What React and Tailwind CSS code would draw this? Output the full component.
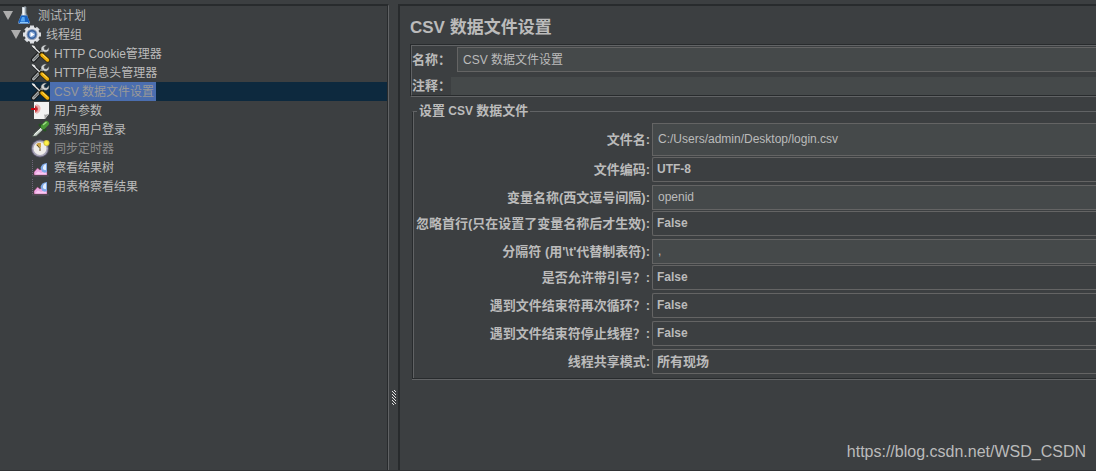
function Flask() {
    return (
        <svg className="w-5 h-[19px]" viewBox="0 0 20 19">
            <path d="M8 1h4v6l3.500 8.500q1 2.500-1.500 2.500H6q-2.500 0-1.500-2.500L8 7z" fill="#aebac4" />
            <path d="M7 9.500h6l2.500 6q.5 2-1.500 2H6q-2 0-1.500-2z" fill="#1763c4" />
            <path d="M8 11h2.500l.5 4.500H6.500z" fill="#58a8f2" />
            <path d="M6 16.500h8" stroke="#8cc8fa" />
            <path d="M8.500 1.500h2V9h-2z" fill="#f4f7f9" />
            <path d="M12 1v6l1.500 3" stroke="#6c7880" fill="none" />
            <path d="M11 2V0" stroke="#9aa4ab" />
        </svg>
    );
}

function Gear() {
    return (
        <svg className="w-5 h-[19px]" viewBox="0 0 20 19">
            <path d="M10 .5v18M1 9.500h18M3.700 3.200l12.600 12.600M16.300 3.200L3.700 15.800" stroke="#d9dce0" strokeWidth="4" />
            <circle cx="10" cy="9.500" r="7.500" fill="#e2e4e8" />
            <circle cx="10" cy="9.500" r="5.500" fill="#8d9bb3" />
            <circle cx="10" cy="9.500" r="4.500" fill="#35619f" />
            <circle cx="10" cy="9.500" r="3" fill="#86a8d8" />
            <path d="M8.500 7l4 2.500-4 2.500z" fill="#fff" />
        </svg>
    );
}

function Tools() {
    return (
        <svg className="w-5 h-[19px]" viewBox="0 0 20 19">
            <path d="M3.500 16L12.500 6.500" stroke="#16181a" strokeWidth="5" strokeLinecap="round" />
            <path d="M3.500 16L12.500 6.500" stroke="#a9adae" strokeWidth="3" strokeLinecap="round" />
            <path d="M4 15.500L9 10.500" stroke="#4d5153" />
            <path d="M16.500 1L14 3.500l.5 2 2 .5L19 3.500q.5 3.500-2 4.500-1.500.5-3 0L11 6q-.5-2.500 1.500-4 2-1.500 4-1z" fill="#d3d6d7" stroke="#4a4d4f" strokeWidth=".5" />
            <path d="M3 2.500l8.500 8" stroke="#16181a" strokeWidth="2.500" />
            <path d="M2.500 2l9 8.500" stroke="#dfe1e2" strokeWidth="1.500" />
            <path d="M1.500 1l3 1 1.500 2.500-2.500-1z" fill="#eee" />
            <path d="M11.500 10.500l6 5.500" stroke="#33280a" strokeWidth="5" strokeLinecap="round" />
            <path d="M12 11l5.500 5" stroke="#eeae0a" strokeWidth="3.500" strokeLinecap="round" />
            <path d="M12.500 10.500l5 4.500" stroke="#ffe169" />
        </svg>
    );
}

function Page() {
    return (
        <svg className="w-5 h-[19px]" viewBox="0 0 20 19">
            <path d="M4 1h15v12l-4 5H4z" fill="#f2f2f2" />
            <path d="M19 12.500L14.500 18q.5-3-.5-4.500 3 .5 5-1z" fill="#a5a5a5" />
            <path d="M6 3q5 1 4.500 5T6 13q2-5 0-10z" fill="#eab2b2" />
            <path d="M5 4q3 1 3 4t-3 4q1-4 0-8z" fill="#d86a6a" />
            <path d="M1 8h5" stroke="#c4000a" strokeWidth="2" />
            <path d="M5 5l3 3-3 3z" fill="#c9202a" />
        </svg>
    );
}

function Dropper() {
    return (
        <svg className="w-5 h-[19px]" viewBox="0 0 20 19">
            <path d="M2 17l2-3.500L11 7l2.500 2.500-7 6.500z" fill="#c6d0c8" stroke="#3f4a42" />
            <path d="M4.500 14.500L11 8.500" stroke="#f4f8f4" />
            <path d="M10 5l5 5" stroke="#24521f" strokeWidth="3" strokeLinecap="round" />
            <path d="M13.500 6.500L16.500 3.500" stroke="#4b9a38" strokeWidth="5" strokeLinecap="round" />
            <path d="M13.500 4.500L16 2.500" stroke="#a2dc88" strokeWidth="1.500" strokeLinecap="round" />
        </svg>
    );
}

function Clock() {
    return (
        <svg className="w-5 h-[19px]" viewBox="0 0 20 19">
            <circle cx="10" cy="9.500" r="9" fill="#5e5a70" />
            <circle cx="10" cy="9.500" r="8" fill="#a9a6b8" />
            <circle cx="10" cy="9.500" r="6.500" fill="#efedea" />
            <path d="M6 6q1.500-3 5-2v5L9 8z" fill="#cfa548" />
            <path d="M7 6l3 3.500V12" stroke="#5a4a20" fill="none" />
            <circle cx="16.500" cy="4" r="3" fill="#d9c83c" />
            <circle cx="16.500" cy="4" r="2" fill="#fff24a" />
        </svg>
    );
}

function Graph() {
    return (
        <svg className="w-5 h-[19px]" viewBox="0 0 20 19">
            <path d="M2.500 2v16H19" stroke="#6d6478" fill="none" strokeDasharray="1 1" />
            <path d="M4 17v-3l3.500-4L10 12l3-2 4 3v4z" fill="#f0a9e6" stroke="#8d3a5e" strokeWidth=".5" />
            <path d="M5 16.500l3-3 3 1.500 4-1.500 2 3z" fill="#f9c9f3" />
            <path d="M10.500 10q1-4.500 6.500-5v9q-3 1.500-5-.5z" fill="#7fa9e8" />
            <path d="M13 9q.5-2.500 3-3v6q-2 .5-3-1z" fill="#e2eefd" />
        </svg>
    );
}

const treeItems = [
    { name: 'HTTP Cookie管理器', icon: Tools },
    { name: 'HTTP信息头管理器', icon: Tools },
    { name: 'CSV 数据文件设置', icon: Tools, selected: true },
    { name: '用户参数', icon: Page },
    { name: '预约用户登录', icon: Dropper },
    { name: '同步定时器', icon: Clock, disabled: true },
    { name: '察看结果树', icon: Graph },
    { name: '用表格察看结果', icon: Graph },
];

const fields = [
    { id: 'filename', label: '文件名:', value: 'C:/Users/admin/Desktop/login.csv', tall: true },
    { id: 'encoding', label: '文件编码:', value: 'UTF-8', options: ['UTF-8', 'UTF-16', 'ISO-8859-15', 'US-ASCII'] },
    { id: 'variables', label: '变量名称(西文逗号间隔):', value: 'openid' },
    { id: 'ignoreFirst', label: '忽略首行(只在设置了变量名称后才生效):', value: 'False', options: ['True', 'False'] },
    { id: 'delimiter', label: "分隔符 (用'\\t'代替制表符):", value: ',' },
    { id: 'quoted', label: '是否允许带引号？:', value: 'False', options: ['True', 'False'] },
    { id: 'recycle', label: '遇到文件结束符再次循环？:', value: 'False', options: ['True', 'False'] },
    { id: 'stopThread', label: '遇到文件结束符停止线程？:', value: 'False', options: ['True', 'False'] },
    { id: 'shareMode', label: '线程共享模式:', value: '所有现场', options: ['所有现场', '当前线程组', '当前线程'], large: true },
];

function Arrow() {
    return (
        <svg className="w-[10px] h-[9px]" viewBox="0 0 10 9">
            <path d="M0 0h10L5 9z" fill="#adadad" />
        </svg>
    );
}

function Tree() {
    return (
        <nav className="w-[389px] shrink-0 border-t-2 border-t-[#282b2d] border-r border-r-[#616365]">
            <div className="h-full border-r border-r-[#282b2d] text-xs">
                <div className="flex items-center h-[19px] pl-[3px]">
                    <Arrow />
                    <span className="ml-px mr-1 flex"><Flask /></span>
                    测试计划
                </div>
                <div className="flex items-center h-[19px] pl-[11px]">
                    <Arrow />
                    <span className="ml-px mr-1 flex"><Gear /></span>
                    线程组
                </div>
                <ul>
                    {treeItems.map((item) => (
                        <li
                            key={item.name}
                            className={`flex items-center h-[19px] pl-[30px] ${item.selected ? 'bg-[#0d293e]' : ''}`}
                        >
                            <item.icon />
                            <span
                                className={`h-[19px] leading-[21px] pl-1 pr-[2px] ${
                                    item.selected ? 'bg-[#4b6eaf] text-[#999999]' :
                                    item.disabled ? 'text-[#8c8c8c]' : ''
                                }`}
                            >
                                {item.name}
                            </span>
                        </li>
                    ))}
                </ul>
            </div>
        </nav>
    );
}

function Grip() {
    return (
        <div className="w-[9px] shrink-0 flex justify-end pr-px pt-[386px]">
            <svg className="w-[5px] h-[15px]" viewBox="0 0 5 15" shapeRendering="crispEdges">
                {[0, 3, 6, 9, 12].map((y) => (
                    <path key={y} d={`M0 ${y + 1}h1v1h-1zM2 ${y}h1v1h-1zM3 ${y + 1}h1v1h-1zM1 ${y + 2}h1v1h-1z`} fill="#e0e0e0" />
                ))}
            </svg>
        </div>
    );
}

function Field({ field }) {
    return (
        <div className={`flex items-center ${field.options ? 'mb-[3px]' : 'mb-px'}`}>
            <label htmlFor={field.id} className="w-[236px] shrink-0 text-right text-[13px] font-bold whitespace-nowrap">
                {field.label}
            </label>
            {field.options ? (
                <select
                    id={field.id}
                    defaultValue={field.value}
                    className={`ml-[2px] flex-1 h-[25px] pl-1 appearance-none bg-[#3c3f41] border border-r-0 border-[#646464] rounded-l-[2px] font-bold ${field.large ? 'text-[13px]' : 'pb-[2px] text-xs'}`}
                >
                    {field.options.map((option) => <option key={option}>{option}</option>)}
                </select>
            ) : (
                <input
                    id={field.id}
                    type="text"
                    defaultValue={field.value}
                    className={`ml-[2px] flex-1 pl-[5px] pb-[2px] bg-[#45494a] border border-r-0 border-[#646464] text-xs ${field.tall ? 'h-[33px]' : 'h-[25px]'}`}
                />
            )}
        </div>
    );
}

export default function App() {
    return (
        <div className='relative flex min-h-screen pt-1 overflow-hidden bg-[#3c3f41] border-b border-[#303335] text-[#bbbbbb] font-["Liberation_Sans","Noto_Sans_CJK_SC",sans-serif]'>
            <Tree />
            <Grip />

            <main className="flex-1 min-w-0 pl-[10px] border-t-2 border-l-2 border-[#282b2d]">
                <h1 className="h-[38px] pt-[10px] text-[17px] leading-6 font-bold">CSV 数据文件设置</h1>

                {/* Name and comments */}
                <div className="border border-r-0 border-t-[#282b2d] border-l-[#282b2d] border-b-[#616365]">
                    <div className="border border-r-0 border-t-[#616365] border-l-[#616365] border-b-[#282b2d] pt-px">
                        <div className="flex items-center">
                            <label htmlFor="name" className="w-[45px] shrink-0 text-[13px] font-bold">名称：</label>
                            <input
                                id="name"
                                type="text"
                                defaultValue="CSV 数据文件设置"
                                className="flex-1 h-[25px] pl-[5px] pb-[2px] bg-[#45494a] border border-r-0 border-[#646464] text-xs"
                            />
                        </div>
                        <div className="flex items-center mt-[5px]">
                            <label htmlFor="comment" className="w-[39px] shrink-0 text-[13px] leading-[18px] font-bold">注释：</label>
                            <input id="comment" type="text" className="flex-1 h-[18px] bg-[#45494a] text-xs" />
                        </div>
                    </div>
                </div>

                {/* CSV data file settings */}
                <div className="ml-[2px] mt-[5px] border-b border-[#616365]">
                    <fieldset className="border border-r-0 border-t-[#616365] border-l-[#282b2d] border-b-[#282b2d]">
                        <legend className="ml-1 px-[2px] text-[13px] leading-[18px] font-bold">
                            设置<span className="text-xs"> CSV </span>数据文件
                        </legend>
                        <div className="-mt-2 pt-[11px] pb-px border-l border-[#616365]">
                            {fields.map((field) => <Field key={field.id} field={field} />)}
                        </div>
                    </fieldset>
                </div>
            </main>

            <a href="https://blog.csdn.net/WSD_CSDN" className="absolute right-[10px] bottom-[6px] text-base leading-6">
                https://blog.csdn.net/WSD_CSDN
            </a>
        </div>
    );
}
